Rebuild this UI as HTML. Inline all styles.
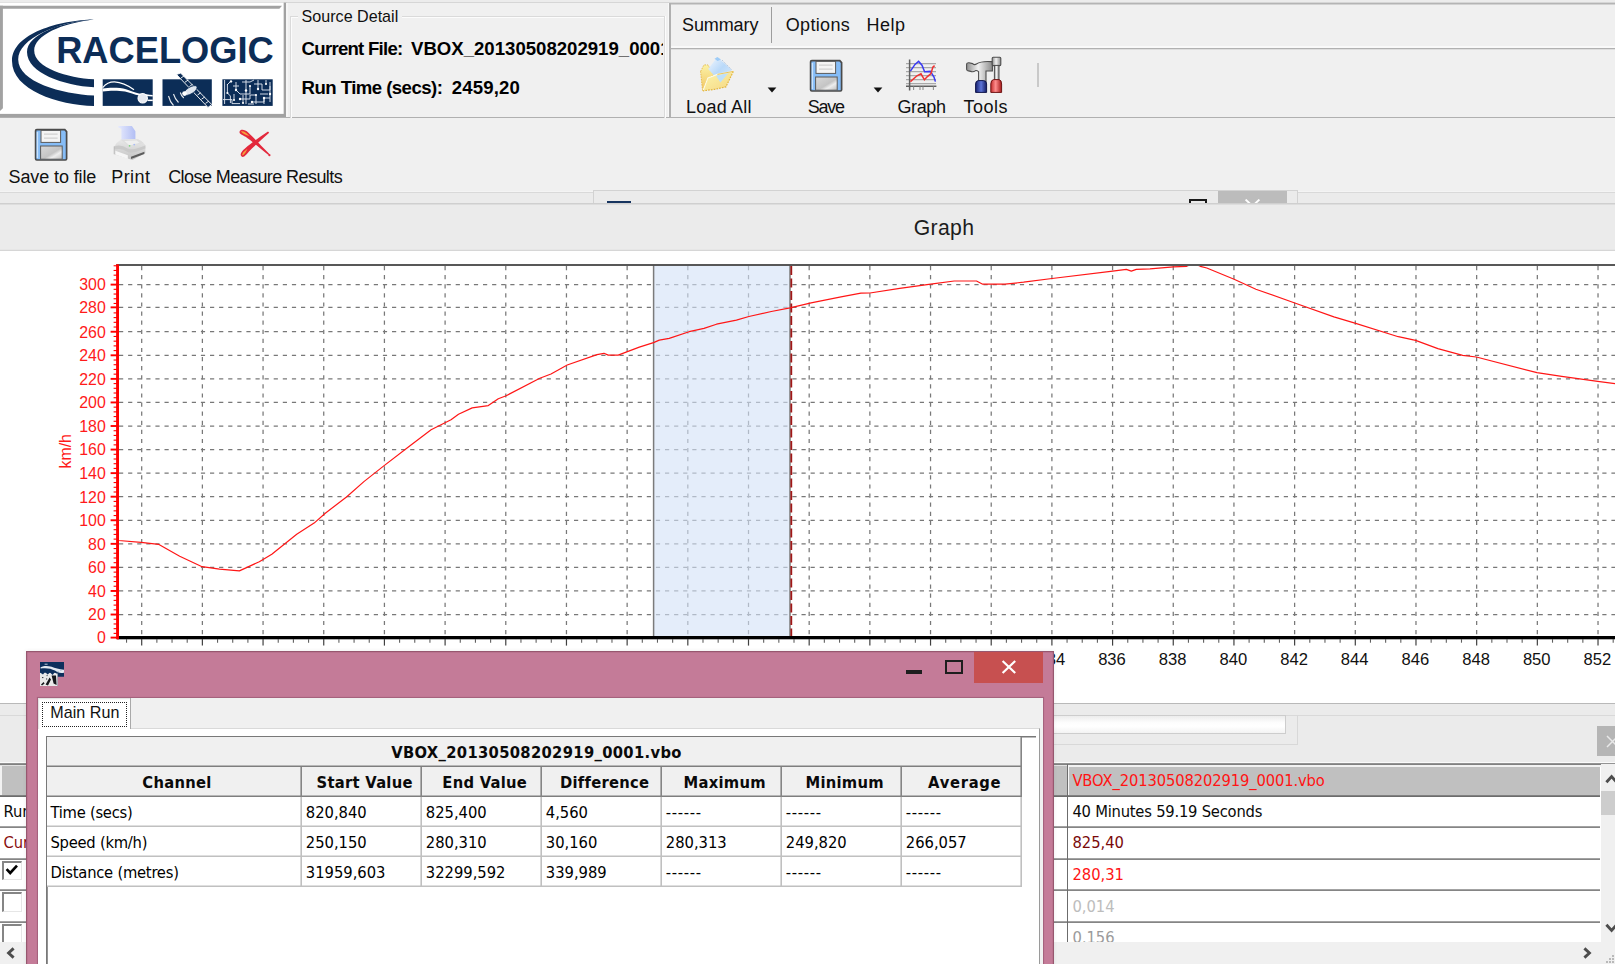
<!DOCTYPE html>
<html lang="en">
<head>
<meta charset="utf-8">
<title>VBOX Tools - Graph</title>
<style>
html,body{margin:0;padding:0}
body{width:1615px;height:964px;overflow:hidden;position:relative;background:#f0f0f0;font-family:"Liberation Sans",sans-serif;color:#000}
.abs{position:absolute}
.seg{font-family:"Liberation Sans",sans-serif;font-size:18px;color:#111;white-space:nowrap;position:absolute;line-height:20px}
.tah{font-family:"DejaVu Sans Condensed","Liberation Sans",sans-serif;font-size:16px;white-space:nowrap}
.gr{stroke:#787878;stroke-width:1.25;stroke-dasharray:4.2 4.9;fill:none}
.xl{font-family:"Liberation Sans",sans-serif;font-size:16.6px;fill:#111;text-anchor:middle}
.yl{font-family:"Liberation Sans",sans-serif;font-size:15.9px;fill:#ff1a1a;text-anchor:end}
/* ---- top ---- */
#topstrip{left:0;top:0;width:1615px;height:2px;background:#ececec}
#hline116{left:0;top:117px;width:1615px;height:2px;background:linear-gradient(#b0b0b0 50%,#d2d2d2 50%)}
/* ---- dialog ---- */
#dlg{left:26px;top:650.8px;width:1027.8px;height:330px;background:#c47b98;box-shadow:0 0 0 1.2px #97576f inset, 0 0 4px rgba(0,0,0,.08)}
#client{left:11.8px;top:46.8px;width:1004.8px;height:300px;background:#f0f0f0;box-shadow:0 0 0 1.1px #a5627d}
.hc{position:absolute;top:0;height:29.6px;line-height:32.4px;padding-left:5px;text-align:center;font-weight:bold;box-shadow:inset -1.6px 0 0 #858585;box-sizing:border-box}
.row{position:absolute;left:0;width:975.5px;height:30px;background:#fff;box-shadow:inset 0 -1.6px 0 #c0c0c0;box-sizing:border-box}
.c{position:absolute;top:0;height:28.8px;line-height:31.2px;box-shadow:inset -1.6px 0 0 #c0c0c0;box-sizing:border-box;padding-left:3.6px}
/* ---- bottom table ---- */
.brow{position:absolute;left:0;width:1599.5px;height:31.6px;box-shadow:inset 0 -1.7px 0 #858585;box-sizing:border-box;background:#fff}
.bt{position:absolute;left:1072.4px;top:0;line-height:32px}
</style>
</head>
<body>

<!-- ================= TOP PANEL ================= -->
<div class="abs" id="topstrip"></div>
<div class="abs" style="left:0;top:2px;width:1615px;height:1.2px;background:#d6d6d6"></div>
<!-- logo panel -->
<svg class="abs" style="left:0;top:0" width="290" height="120" viewBox="0 0 290 120">
  <rect x="0" y="2.7" width="283.7" height="111.2" fill="#fff"/>
  <polygon points="0,5.85 282,5.85 279.4,8.8 0,8.8" fill="#a2a2a2"/>
  <polygon points="0,5.85 2.9,5.85 2.9,108.2 0,111" fill="#a2a2a2"/>
  <rect x="283.7" y="2.7" width="2.7" height="115.9" fill="#a2a2a2"/>
  <rect x="0" y="113.9" width="286.4" height="4.75" fill="#a2a2a2"/>
</svg>
<div class="abs" style="left:286.4px;top:3px;width:1.2px;height:114px;background:#f6f6f6"></div>
<div class="abs" id="hline116"></div>
<svg class="abs" style="left:3px;top:9px" width="281" height="105" viewBox="3 9 281 105">
  <!-- swoosh arcs -->
  <path d="M94 19.4 C60 20 12 33 12 61 C12 90 58 105 94 106 L94 95.6 C62 94 18.2 82 18.2 59.5 C18.2 38 58 22 94 19.4 Z" fill="#0c2d57"/>
  <path d="M94 19.4 C62 21.6 27 34 27 52 C27 73 64 85.6 94 87.3 L94 79.3 C68 78 34.2 68 34.2 50.5 C34.2 35 62 23 94 19.4 Z" fill="#0c2d57"/>
  <!-- wordmark -->
  <text x="56.2" y="62.6" font-family="'Liberation Sans',sans-serif" font-weight="bold" font-size="37.3" fill="#0c2d57" textLength="217.5" lengthAdjust="spacingAndGlyphs">RACELOGIC</text>
  <!-- three tiles -->
  <rect x="102.7" y="79.3" width="50" height="26.6" fill="#0c2d57"/>
  <path d="M102.7 87.6 C106 83.6 110 81.8 114.5 81.9 C121 82.2 128 85.4 134 89.8" fill="none" stroke="#fff" stroke-width="1.15"/>
  <path d="M102.7 88.6 C110 87.4 120 87.6 126 89.2 C131 90.6 135.4 92.8 139 93.6 C144 94.4 149 94.6 152.7 95 L152.7 96.6 C148 96.2 143.6 96.2 139.6 95.6 C134 94.8 130 92.6 125 91.6 C118 90.2 109 90.6 102.7 91.4 Z" fill="#fff"/>
  <circle cx="142.7" cy="98.2" r="4.7" fill="#e6eaf1" stroke="#fff" stroke-width="1.1"/>
  <rect x="147.4" y="99.6" width="5.4" height="1.5" fill="#fff"/>
  <rect x="162.5" y="79.3" width="49.3" height="26.6" fill="#0c2d57"/>
  <g stroke="#fff" fill="none" stroke-width="1.1" opacity=".9">
    <path d="M168.5 96 q1.5 6 5 9.5"/><path d="M173.5 94 q1.5 5 5 8.5"/><path d="M180.3 92.5 q1 3.5 3.5 5.5"/>
  </g>
  <path d="M176.5 74.5 L180.6 73 L211.8 104.6 L208 107.4 Z" fill="#0c2d57" stroke="#fff" stroke-width=".9"/>
  <g stroke="#fff" stroke-width=".9"><path d="M181 78 l3.2-2.2M185 82.2 l3.2-2.2M189.3 86.6 l3.2-2.2M197.5 95 l3.2-2.2M201.5 99.2 l3.2-2.2M205.5 103.4 l3.2-2.2"/></g>
  <ellipse cx="190.5" cy="90.5" rx="7.5" ry="3.3" transform="rotate(-32 190.5 90.5)" fill="#dfe5ee" stroke="#0c2d57" stroke-width=".7"/>
  <circle cx="184.5" cy="93.6" r="2.3" fill="#fff"/>
  <rect x="222.4" y="79.3" width="50.3" height="26.6" fill="#0c2d57"/>
  <g stroke="#e4eaf3" stroke-width=".95" fill="none" opacity=".95">
    <path d="M224.6 80 v24 M227.4 84 v9 l3 3 v7 M223 99.6 h9 v4 h8 M231 81 l-4 4 M236 82 v8 M233 86 h6 M236 90 l4 4 h6 M246 80 v24 M242 82 h8 l4 -2 M250 86 v8 h-4 M240 99 h10 v-4 h6 M254 84 h8 v6 M258 80 v9 M262 90 h8 v-8 M266 80 v4 M256 95 v9 M252 102 h12 v-4 h6 M270 86 v16 M260 94 h8 M243 95 v8 M248 104 h6 M264 98 v6 M234 94 v6"/>
  </g>
  <g fill="#fff"><circle cx="231" cy="81.4" r="1.2"/><circle cx="236" cy="90" r="1.2"/><circle cx="246" cy="90.5" r="1.2"/><circle cx="258" cy="89" r="1.2"/><circle cx="264" cy="98" r="1.2"/><circle cx="240" cy="99" r="1.2"/><circle cx="252" cy="102" r="1.2"/><circle cx="270" cy="94" r="1.2"/><circle cx="227.4" cy="93" r="1.1"/><circle cx="250" cy="86" r="1.1"/><circle cx="266" cy="84" r="1.1"/><circle cx="256" cy="95" r="1.1"/><circle cx="243" cy="103" r="1.1"/><circle cx="234" cy="100" r="1.1"/></g>
</svg>

<!-- source detail group -->
<div class="abs" style="left:289.6px;top:15.6px;width:373px;height:101px;border:1px solid #dadada;border-bottom:none;box-shadow:1px 1px 0 #fcfcfc inset, 1px 0 0 #fcfcfc"></div>
<div class="abs" style="left:298px;top:6px;width:104px;height:20px;background:#f0f0f0"></div>
<div class="abs" style="left:301.6px;top:6.4px;font-size:16.1px;line-height:20px;color:#111;white-space:nowrap">Source Detail</div>
<div class="abs" style="left:301.6px;top:37px;width:361.8px;height:24px;overflow:hidden;font-size:18.6px;font-weight:bold;line-height:24px;white-space:nowrap;color:#000"><span class="abs" style="left:0;top:0;letter-spacing:-.74px">Current File:</span><span class="abs" style="left:109.4px;top:0;letter-spacing:0">VBOX_20130508202919_0001.vbo</span></div>
<div class="abs" style="left:301.6px;top:75.8px;width:300px;height:24px;font-size:18.6px;font-weight:bold;line-height:24px;white-space:nowrap;color:#000"><span class="abs" style="left:0;top:0;letter-spacing:-.55px">Run Time (secs):</span><span class="abs" style="left:150.2px;top:0;letter-spacing:.15px">2459,20</span></div>
<div class="abs" style="left:0;top:118.4px;width:1615px;height:8px;background:#f0f0f0"></div>

<!-- menu + toolbar frame -->
<div class="abs" style="left:669px;top:3px;width:946px;height:1px;background:#b4b4b4"></div><div class="abs" style="left:671px;top:4px;width:944px;height:1px;background:#d2d2d2"></div>
<div class="abs" style="left:667.9px;top:3px;width:1.3px;height:114px;background:#f8f8f8"></div><div class="abs" style="left:669.2px;top:3px;width:1.6px;height:114px;background:#b0b0b0"></div>
<div class="abs" style="left:670.8px;top:46.3px;width:945px;height:1.3px;background:#f9f9f9"></div><div class="abs" style="left:670px;top:48px;width:945px;height:1px;background:#b1b1b1"></div><div class="abs" style="left:671px;top:49px;width:944px;height:1px;background:#dedede"></div>
<div class="seg" style="left:682px;top:15.1px;letter-spacing:-.1px">Summary</div>
<div class="abs" style="left:771px;top:7.4px;width:1.4px;height:35.6px;background:#9d9d9d"></div>
<div class="seg" style="left:785.8px;top:15.1px;letter-spacing:.32px">Options</div>
<div class="seg" style="left:866.4px;top:15.1px;letter-spacing:.5px">Help</div>

<!-- Load All -->
<svg class="abs" style="left:698px;top:54px" width="40" height="40" viewBox="0 0 40 40">
  <defs><linearGradient id="fp" x1="0" y1="0" x2="1" y2="1"><stop offset="0" stop-color="#f4f8fe"/><stop offset=".5" stop-color="#b9d9f9"/><stop offset="1" stop-color="#d9eafc"/></linearGradient>
  <linearGradient id="ff" x1="0" y1="0" x2="1" y2="1"><stop offset="0" stop-color="#fcf6ad"/><stop offset="1" stop-color="#f5d682"/></linearGradient>
  <linearGradient id="fb" x1="0" y1="0" x2="0" y2="1"><stop offset="0" stop-color="#fbf2a6"/><stop offset="1" stop-color="#f2c461"/></linearGradient></defs>
  <path d="M2.6 17.4 L6 10.9 H9.9 L15.9 20.9 L9.9 24 L4.6 37.2 Z" fill="url(#fb)" stroke="#e4b948" stroke-width=".9" stroke-dasharray="1.6 1"/>
  <path d="M19.4 3 L33.8 15.9 L22.4 28.4 L10.2 14.9 Z" fill="url(#fp)"/>
  <path d="M16.5 4.8 L19.4 3 L23 5.4 L19.6 7 Z" fill="#8fc4f6" opacity=".8"/>
  <path d="M24 6 L33.8 15.9" stroke="#b5c6dc" stroke-width="1" stroke-dasharray="1.4 1"/>
  <path d="M5 36.8 L9.9 23.9 L19.4 20.4 L35.3 17.4 L27.9 32.9 L16.9 35.3 Z" fill="url(#ff)"/>
  <path d="M17.9 21.6 L30.6 19 L22.4 28.4 Z" fill="#bfe0f9"/>
  <path d="M5 36.8 L9.9 23.9 L19.4 20.4 L35.3 17.4" fill="none" stroke="#fdfbe6" stroke-width="1.1"/>
  <path d="M35.3 17.4 L27.9 32.9 L16.9 35.3 L5 36.8" fill="none" stroke="#e2b53e" stroke-width="1.2" stroke-dasharray="1.7 1.1"/>
  <path d="M19.4 20.4 L35.3 17.4" fill="none" stroke="#e6bd4e" stroke-width=".9"/>
</svg>
<div class="seg" style="left:686px;top:97.4px;letter-spacing:.2px">Load All</div>
<svg class="abs" style="left:766.5px;top:86.6px" width="10" height="6" viewBox="0 0 10 6"><path d="M.6 .6 L9.4 .6 L5 5.4 Z" fill="#111"/></svg>

<!-- Save -->
<svg class="abs" style="left:809.4px;top:59.2px" width="34" height="33" viewBox="0 0 34 33">
  <use href="#floppy"/>
</svg>
<div class="seg" style="left:807.8px;top:97.4px;letter-spacing:-1.25px">Save</div>
<svg class="abs" style="left:873.3px;top:86.6px" width="10" height="6" viewBox="0 0 10 6"><path d="M.6 .6 L9.4 .6 L5 5.4 Z" fill="#111"/></svg>

<!-- Graph -->
<svg class="abs" style="left:904px;top:58px" width="36" height="36" viewBox="0 0 36 36">
  <g stroke="#a9a9a9" stroke-width="1.1"><path d="M2 5.6 H32 M2 9.6 H32 M2 13.6 H32 M2 17.6 H32 M2 21.6 H32 M2 25.6 H32"/></g>
  <path d="M5.6 1.5 V32.5 M2 28.2 H32.4" stroke="#606060" stroke-width="1.5" fill="none"/>
  <path d="M9.6 28.5 v3.6 M16 28.5 v3.6 M19 28.5 v3.6 M29.4 28.5 v3.6" stroke="#909090" stroke-width="1.1"/>
  <path d="M6.4 13.2 L11 6.4 L14.6 3.4 L18 7.2 L20.6 13.8 L26.4 13.4 L30 19 L31.4 23.6" fill="none" stroke="#3a3af2" stroke-width="1.5"/>
  <path d="M6.4 23.6 L13 17.8 L17 15.8 L20.4 21.8 L23.4 18.6 L27 15.6 L28.8 9.2 L30.6 7.6" fill="none" stroke="#f03030" stroke-width="1.5"/>
</svg>
<div class="seg" style="left:897.4px;top:97.4px;letter-spacing:-.35px">Graph</div>

<!-- Tools -->
<svg class="abs" style="left:964px;top:55px" width="42" height="40" viewBox="0 0 42 40">
  <defs><linearGradient id="mg" x1="0" x2="1"><stop offset="0" stop-color="#8f8f8f"/><stop offset=".45" stop-color="#f2f2f2"/><stop offset="1" stop-color="#8a8a8a"/></linearGradient>
  <linearGradient id="bg" x1="0" x2="1"><stop offset="0" stop-color="#16206e"/><stop offset=".5" stop-color="#5d74d8"/><stop offset="1" stop-color="#141c62"/></linearGradient>
  <linearGradient id="rg" x1="0" x2="1"><stop offset="0" stop-color="#c22a2a"/><stop offset=".45" stop-color="#ff8d8d"/><stop offset="1" stop-color="#a51818"/></linearGradient></defs>
  <path d="M2.6 9.6 Q2.6 7.6 5 7.8 L8.6 8.6 Q10.4 10.4 12.4 9 Q17 6 27 6.6 L28.4 6.6 V16 H22 V27 H14.6 V16.6 Q13 15.4 11.6 15.6 Q9.6 17 7.6 16.6 L3.6 15.6 Q2.4 15.2 2.6 13.6 Z" fill="url(#mg)" stroke="#4e4e4e" stroke-width="1.1"/>
  <rect x="28.2" y="2.2" width="8.6" height="8.4" rx="1" fill="url(#mg)" stroke="#4e4e4e" stroke-width="1.1"/>
  <rect x="30.4" y="10.4" width="4.6" height="15" fill="url(#mg)" stroke="#4e4e4e" stroke-width="1"/>
  <path d="M11.6 37.4 V29 Q11.6 25.8 14.4 25.6 H19.6 Q22.6 25.8 22.6 29 V37.4 Z" fill="url(#bg)" stroke="#11164a" stroke-width="1"/>
  <path d="M26.8 37.4 V29 Q26.8 25 29.6 24.6 H35 Q37.6 25 37.6 29 V37.4 Z" fill="url(#rg)" stroke="#6e1414" stroke-width="1"/>
</svg>
<div class="seg" style="left:963.4px;top:97.4px;letter-spacing:.5px">Tools</div>
<div class="abs" style="left:1037px;top:63px;width:2px;height:24px;background:#c9c9c9"></div>

<!-- shared floppy symbol -->
<svg width="0" height="0" style="position:absolute">
  <defs>
    <linearGradient id="shut" x1="0" y1="0" x2="1" y2="1"><stop offset="0" stop-color="#d9d9d9"/><stop offset=".55" stop-color="#c4c4c4"/><stop offset=".7" stop-color="#ededed"/><stop offset="1" stop-color="#bdbdbd"/></linearGradient>
    <g id="floppy">
      <path d="M1.6 2.8 Q1.6 1.6 2.8 1.6 H30.8 L32.6 3.6 V30.8 Q32.6 32 31.4 32 H2.8 Q1.6 32 1.6 30.8 Z" fill="#86bdf7" stroke="#4a4a4a" stroke-width="1.7"/>
      <path d="M3.4 4 V30" stroke="#c9e2fc" stroke-width="1.4"/>
      <rect x="7" y="2.4" width="19.6" height="12" fill="#f4f4f4" stroke="#5a5a5a" stroke-width="1"/>
      <path d="M10 6.2 H23.6 M10 10.2 H23.6" stroke="#cfcfcf" stroke-width="1.2"/>
      <rect x="6.6" y="18" width="21.6" height="13.2" fill="url(#shut)" stroke="#5a5a5a" stroke-width="1"/>
    </g>
  </defs>
</svg>


<!-- ================= TOOLBAR 2 ================= -->
<svg class="abs" style="left:34.4px;top:128.4px" width="34" height="33" viewBox="0 0 34 33"><use href="#floppy"/></svg>
<div class="seg" style="left:8.6px;top:166.6px;letter-spacing:-.12px">Save to file</div>
<!-- printer -->
<svg class="abs" style="left:112px;top:124px" width="38" height="38" viewBox="0 0 38 38">
  <defs><linearGradient id="pap" x1="0" y1="0" x2="1" y2="0"><stop offset="0" stop-color="#e6eafd"/><stop offset="1" stop-color="#b2bef4"/></linearGradient>
  <linearGradient id="pbody" x1="0" y1="0" x2="0" y2="1"><stop offset="0" stop-color="#e9e9e9"/><stop offset="1" stop-color="#c4c4c4"/></linearGradient></defs>
  <path d="M6.3 2 H19.9 L23.4 7.2 V15 L9.4 16 V4.8 L6.3 3.4 Z" fill="url(#pap)"/>
  <path d="M2.2 22.4 Q4.6 18.4 8.6 15.8 L26 15.2 Q31.4 17.6 33.4 21.4 V29 L20.4 36 L2.2 30.2 Z" fill="url(#pbody)"/>
  <path d="M8.6 15.8 L26 15.2 Q29.4 16.8 31.4 19 L18 23.4 Q12.6 18.6 8.6 15.8 Z" fill="#dedede"/>
  <path d="M12.4 17 L24.6 16.4 L27.6 18.8 L17.6 21.4 Z" fill="#efefef"/>
  <path d="M2.2 22.4 Q9 20 15.6 24.6 Q19 27 33.4 21.4 V24.4 Q19 30.4 15.8 28 Q9 23.4 2.2 25.6 Z" fill="#c9c9c9"/>
  <path d="M3.4 26.8 L15.8 31.2 V35 L3.4 30.6 Z" fill="#f6f6f6"/>
  <path d="M19 32.8 L32.4 27.8 V30 L19 35 Z" fill="#5c5c5c"/>
  <path d="M2.2 22.4 V30.2" stroke="#b5b5b5" stroke-width=".8"/>
  <circle cx="17.6" cy="21.8" r=".9" fill="#7ed47e"/><circle cx="22.2" cy="20.6" r=".85" fill="#a3b8f6"/>
</svg>
<div class="seg" style="left:111.2px;top:166.6px;letter-spacing:.45px">Print</div>
<!-- red X -->
<svg class="abs" style="left:238px;top:128px" width="36" height="32" viewBox="0 0 36 32">
  <path d="M1.6 3.6 C2.4 .8 7.2 1.6 10.2 4.6 C15.4 9.4 23 17.8 31.4 26 L30.4 27 C22 20 13.4 12.8 7.6 8.8 C4 6.6 1 5.8 1.6 3.6 Z" fill="#e3283c"/>
  <path d="M3.6 28.6 C1.4 26.6 3.2 23.4 7 20.4 C13 15.2 22 8.8 30 3.4 L31.2 4.8 C24 11 16.8 17.8 11.2 23.2 C8.6 26.2 5.8 30.2 3.6 28.6 Z" fill="#e3283c"/>
  <path d="M3 3.4 C5.4 2.8 8.4 4.8 11.4 8 C8 6.6 4.6 6 3 3.4 Z" fill="#f7a13a"/>
  <path d="M4.4 27.4 C3.8 25.6 6 23.2 9.4 21 C8 23.8 6.6 26.8 4.4 27.4 Z" fill="#f7a13a"/>
  <circle cx="31.4" cy="27.2" r="1.1" fill="#e3283c"/>
</svg>
<div class="seg" style="left:168.2px;top:166.6px;letter-spacing:-.58px">Close Measure Results</div>
<div class="abs" style="left:0;top:190.9px;width:1615px;height:1px;background:#f4f4f4"></div><div class="abs" style="left:0;top:191.9px;width:1615px;height:1.2px;background:#d9d9d9"></div>


<!-- ================= GRAPH ================= -->
<!-- strip 192-204 with window fragment -->
<div class="abs" style="left:0;top:192.8px;width:593px;height:10.6px;background:#ebebeb"></div>
<div class="abs" style="left:1298px;top:192.8px;width:317px;height:10.6px;background:#ebebeb"></div>
<div class="abs" style="left:592.8px;top:190.2px;width:703.4px;height:14px;background:#ebebeb;border:1.2px solid #d2d2d2;border-bottom:none"></div>
<div class="abs" style="left:607px;top:201px;width:24px;height:3.4px;background:#16345f"></div>
<div class="abs" style="left:1189px;top:199px;width:14.2px;height:6px;border:2px solid #1a1a1a;border-bottom:none"></div>
<div class="abs" style="left:1218.2px;top:191.2px;width:68.6px;height:13.2px;background:#bcbcbc;overflow:hidden">
  <svg class="abs" style="left:26px;top:8px" width="17" height="14" viewBox="0 0 17 14"><path d="M1.6 .6 L15.4 13.4 M15.4 .6 L1.6 13.4" stroke="#fff" stroke-width="1.9" fill="none"/></svg>
</div>
<!-- Graph header -->
<div class="abs" style="left:0;top:203.1px;width:1615px;height:48px;background:#ebebeb;box-shadow:inset 0 1.6px 0 #cfcfcf, inset 0 -1.3px 0 #d6d6d6;box-sizing:border-box"></div>
<div class="abs" style="left:844px;top:214.6px;width:200px;text-align:center;font-size:21.2px;line-height:26px;color:#1c1c1c;letter-spacing:.35px">Graph</div>

<div class="abs" style="left:0;top:251px;width:1615px;height:452px;background:#fff"></div>
<svg id="gsvg" width="1615" height="452" viewBox="0 0 1615 452" style="position:absolute;left:0;top:251px">
<defs><clipPath id="pc"><rect x="118" y="14.95" width="1500" height="374"/></clipPath></defs>
<line x1="119" x2="1615" y1="363.53" y2="363.53" class="gr"/>
<line x1="119" x2="1615" y1="339.97" y2="339.97" class="gr"/>
<line x1="119" x2="1615" y1="316.40" y2="316.40" class="gr"/>
<line x1="119" x2="1615" y1="292.84" y2="292.84" class="gr"/>
<line x1="119" x2="1615" y1="269.27" y2="269.27" class="gr"/>
<line x1="119" x2="1615" y1="245.70" y2="245.70" class="gr"/>
<line x1="119" x2="1615" y1="222.14" y2="222.14" class="gr"/>
<line x1="119" x2="1615" y1="198.57" y2="198.57" class="gr"/>
<line x1="119" x2="1615" y1="175.01" y2="175.01" class="gr"/>
<line x1="119" x2="1615" y1="151.44" y2="151.44" class="gr"/>
<line x1="119" x2="1615" y1="127.87" y2="127.87" class="gr"/>
<line x1="119" x2="1615" y1="104.31" y2="104.31" class="gr"/>
<line x1="119" x2="1615" y1="80.74" y2="80.74" class="gr"/>
<line x1="119" x2="1615" y1="56.35" y2="56.35" class="gr"/>
<line x1="119" x2="1615" y1="33.61" y2="33.61" class="gr"/>
<line y1="15.00" y2="385.00" x1="141.70" x2="141.70" class="gr"/>
<line y1="15.00" y2="385.00" x1="202.38" x2="202.38" class="gr"/>
<line y1="15.00" y2="385.00" x1="263.06" x2="263.06" class="gr"/>
<line y1="15.00" y2="385.00" x1="323.74" x2="323.74" class="gr"/>
<line y1="15.00" y2="385.00" x1="384.42" x2="384.42" class="gr"/>
<line y1="15.00" y2="385.00" x1="445.10" x2="445.10" class="gr"/>
<line y1="15.00" y2="385.00" x1="505.78" x2="505.78" class="gr"/>
<line y1="15.00" y2="385.00" x1="566.46" x2="566.46" class="gr"/>
<line y1="15.00" y2="385.00" x1="627.14" x2="627.14" class="gr"/>
<line y1="15.00" y2="385.00" x1="687.82" x2="687.82" class="gr"/>
<line y1="15.00" y2="385.00" x1="748.50" x2="748.50" class="gr"/>
<line y1="15.00" y2="385.00" x1="809.18" x2="809.18" class="gr"/>
<line y1="15.00" y2="385.00" x1="869.86" x2="869.86" class="gr"/>
<line y1="15.00" y2="385.00" x1="930.54" x2="930.54" class="gr"/>
<line y1="15.00" y2="385.00" x1="991.22" x2="991.22" class="gr"/>
<line y1="15.00" y2="385.00" x1="1051.90" x2="1051.90" class="gr"/>
<line y1="15.00" y2="385.00" x1="1112.58" x2="1112.58" class="gr"/>
<line y1="15.00" y2="385.00" x1="1173.26" x2="1173.26" class="gr"/>
<line y1="15.00" y2="385.00" x1="1233.94" x2="1233.94" class="gr"/>
<line y1="15.00" y2="385.00" x1="1294.62" x2="1294.62" class="gr"/>
<line y1="15.00" y2="385.00" x1="1355.30" x2="1355.30" class="gr"/>
<line y1="15.00" y2="385.00" x1="1415.98" x2="1415.98" class="gr"/>
<line y1="15.00" y2="385.00" x1="1476.66" x2="1476.66" class="gr"/>
<line y1="15.00" y2="385.00" x1="1537.34" x2="1537.34" class="gr"/>
<line y1="15.00" y2="385.00" x1="1598.02" x2="1598.02" class="gr"/>
<rect x="653.60" y="14.80" width="136.40" height="370.20" fill="#d3e2f7" fill-opacity="0.62"/>
<line x1="653.60" x2="653.60" y1="14.80" y2="385.00" stroke="#7b7b7b" stroke-width="1.5"/>
<line x1="790.00" x2="790.00" y1="14.80" y2="385.00" stroke="#7b7b7b" stroke-width="1.5"/>
<line x1="791.30" x2="791.30" y1="15.00" y2="385.00" stroke="#a01818" stroke-width="1.8" stroke-dasharray="9 3.5"/>
<line x1="116.2" x2="1615" y1="14.10" y2="14.10" stroke="#202020" stroke-width="1.5"/>
<polyline clip-path="url(#pc)" fill="none" stroke="#ff1616" stroke-width="1.2" stroke-linejoin="round" points="117.0,289.3 118.7,289.5 141.1,291.3 158.5,293.3 179.7,305.2 202.1,315.7 219.5,318.2 239.4,319.9 259.3,310.7 271.8,303.2 296.7,283.3 314.1,272.1 325.3,262.2 346.5,246.0 363.9,230.6 383.8,214.9 408.7,195.7 431.1,178.8 451.0,168.8 458.5,163.3 472.2,156.9 488.3,154.6 498.3,147.7 506.2,144.7 539.8,127.2 551.0,123.0 567.2,114.0 597.0,103.6 604.0,102.3 608.2,104.1 618.2,104.1 639.3,96.1 653.5,91.6 659.3,89.1 669.2,87.4 689.1,80.7 704.0,77.4 716.5,73.2 736.4,69.2 748.9,65.5 771.3,60.5 790.0,56.8 811.1,51.8 841.0,45.8 860.9,42.1 870.0,42.0 899.7,37.4 930.7,33.2 954.2,30.0 976.5,30.0 982.7,33.2 1005.0,33.2 1023.6,31.2 1052.0,27.5 1112.7,20.1 1126.3,18.4 1131.3,20.1 1136.3,18.4 1150.0,17.9 1173.4,15.9 1186.7,15.3 1193.5,12.0 1200.3,15.3 1206.8,17.0 1234.1,28.3 1255.9,38.2 1295.5,52.3 1333.9,65.9 1354.9,72.1 1398.3,85.7 1415.6,89.4 1437.9,97.6 1462.7,104.3 1476.3,106.0 1537.0,121.6 1561.7,125.4 1597.7,130.3 1616.0,132.8"/>
<rect x="117" y="385.00" width="1500" height="3.3" fill="#000"/>
<line x1="126.53" x2="126.53" y1="388.00" y2="391.70" stroke="#606060" stroke-width="1.1"/>
<line x1="141.70" x2="141.70" y1="388.00" y2="394.60" stroke="#404040" stroke-width="1.2"/>
<line x1="156.87" x2="156.87" y1="388.00" y2="391.70" stroke="#606060" stroke-width="1.1"/>
<line x1="172.04" x2="172.04" y1="388.00" y2="391.70" stroke="#606060" stroke-width="1.1"/>
<line x1="187.21" x2="187.21" y1="388.00" y2="391.70" stroke="#606060" stroke-width="1.1"/>
<line x1="202.38" x2="202.38" y1="388.00" y2="394.60" stroke="#404040" stroke-width="1.2"/>
<line x1="217.55" x2="217.55" y1="388.00" y2="391.70" stroke="#606060" stroke-width="1.1"/>
<line x1="232.72" x2="232.72" y1="388.00" y2="391.70" stroke="#606060" stroke-width="1.1"/>
<line x1="247.89" x2="247.89" y1="388.00" y2="391.70" stroke="#606060" stroke-width="1.1"/>
<line x1="263.06" x2="263.06" y1="388.00" y2="394.60" stroke="#404040" stroke-width="1.2"/>
<line x1="278.23" x2="278.23" y1="388.00" y2="391.70" stroke="#606060" stroke-width="1.1"/>
<line x1="293.40" x2="293.40" y1="388.00" y2="391.70" stroke="#606060" stroke-width="1.1"/>
<line x1="308.57" x2="308.57" y1="388.00" y2="391.70" stroke="#606060" stroke-width="1.1"/>
<line x1="323.74" x2="323.74" y1="388.00" y2="394.60" stroke="#404040" stroke-width="1.2"/>
<line x1="338.91" x2="338.91" y1="388.00" y2="391.70" stroke="#606060" stroke-width="1.1"/>
<line x1="354.08" x2="354.08" y1="388.00" y2="391.70" stroke="#606060" stroke-width="1.1"/>
<line x1="369.25" x2="369.25" y1="388.00" y2="391.70" stroke="#606060" stroke-width="1.1"/>
<line x1="384.42" x2="384.42" y1="388.00" y2="394.60" stroke="#404040" stroke-width="1.2"/>
<line x1="399.59" x2="399.59" y1="388.00" y2="391.70" stroke="#606060" stroke-width="1.1"/>
<line x1="414.76" x2="414.76" y1="388.00" y2="391.70" stroke="#606060" stroke-width="1.1"/>
<line x1="429.93" x2="429.93" y1="388.00" y2="391.70" stroke="#606060" stroke-width="1.1"/>
<line x1="445.10" x2="445.10" y1="388.00" y2="394.60" stroke="#404040" stroke-width="1.2"/>
<line x1="460.27" x2="460.27" y1="388.00" y2="391.70" stroke="#606060" stroke-width="1.1"/>
<line x1="475.44" x2="475.44" y1="388.00" y2="391.70" stroke="#606060" stroke-width="1.1"/>
<line x1="490.61" x2="490.61" y1="388.00" y2="391.70" stroke="#606060" stroke-width="1.1"/>
<line x1="505.78" x2="505.78" y1="388.00" y2="394.60" stroke="#404040" stroke-width="1.2"/>
<line x1="520.95" x2="520.95" y1="388.00" y2="391.70" stroke="#606060" stroke-width="1.1"/>
<line x1="536.12" x2="536.12" y1="388.00" y2="391.70" stroke="#606060" stroke-width="1.1"/>
<line x1="551.29" x2="551.29" y1="388.00" y2="391.70" stroke="#606060" stroke-width="1.1"/>
<line x1="566.46" x2="566.46" y1="388.00" y2="394.60" stroke="#404040" stroke-width="1.2"/>
<line x1="581.63" x2="581.63" y1="388.00" y2="391.70" stroke="#606060" stroke-width="1.1"/>
<line x1="596.80" x2="596.80" y1="388.00" y2="391.70" stroke="#606060" stroke-width="1.1"/>
<line x1="611.97" x2="611.97" y1="388.00" y2="391.70" stroke="#606060" stroke-width="1.1"/>
<line x1="627.14" x2="627.14" y1="388.00" y2="394.60" stroke="#404040" stroke-width="1.2"/>
<line x1="642.31" x2="642.31" y1="388.00" y2="391.70" stroke="#606060" stroke-width="1.1"/>
<line x1="657.48" x2="657.48" y1="388.00" y2="391.70" stroke="#606060" stroke-width="1.1"/>
<line x1="672.65" x2="672.65" y1="388.00" y2="391.70" stroke="#606060" stroke-width="1.1"/>
<line x1="687.82" x2="687.82" y1="388.00" y2="394.60" stroke="#404040" stroke-width="1.2"/>
<line x1="702.99" x2="702.99" y1="388.00" y2="391.70" stroke="#606060" stroke-width="1.1"/>
<line x1="718.16" x2="718.16" y1="388.00" y2="391.70" stroke="#606060" stroke-width="1.1"/>
<line x1="733.33" x2="733.33" y1="388.00" y2="391.70" stroke="#606060" stroke-width="1.1"/>
<line x1="748.50" x2="748.50" y1="388.00" y2="394.60" stroke="#404040" stroke-width="1.2"/>
<line x1="763.67" x2="763.67" y1="388.00" y2="391.70" stroke="#606060" stroke-width="1.1"/>
<line x1="778.84" x2="778.84" y1="388.00" y2="391.70" stroke="#606060" stroke-width="1.1"/>
<line x1="794.01" x2="794.01" y1="388.00" y2="391.70" stroke="#606060" stroke-width="1.1"/>
<line x1="809.18" x2="809.18" y1="388.00" y2="394.60" stroke="#404040" stroke-width="1.2"/>
<line x1="824.35" x2="824.35" y1="388.00" y2="391.70" stroke="#606060" stroke-width="1.1"/>
<line x1="839.52" x2="839.52" y1="388.00" y2="391.70" stroke="#606060" stroke-width="1.1"/>
<line x1="854.69" x2="854.69" y1="388.00" y2="391.70" stroke="#606060" stroke-width="1.1"/>
<line x1="869.86" x2="869.86" y1="388.00" y2="394.60" stroke="#404040" stroke-width="1.2"/>
<line x1="885.03" x2="885.03" y1="388.00" y2="391.70" stroke="#606060" stroke-width="1.1"/>
<line x1="900.20" x2="900.20" y1="388.00" y2="391.70" stroke="#606060" stroke-width="1.1"/>
<line x1="915.37" x2="915.37" y1="388.00" y2="391.70" stroke="#606060" stroke-width="1.1"/>
<line x1="930.54" x2="930.54" y1="388.00" y2="394.60" stroke="#404040" stroke-width="1.2"/>
<line x1="945.71" x2="945.71" y1="388.00" y2="391.70" stroke="#606060" stroke-width="1.1"/>
<line x1="960.88" x2="960.88" y1="388.00" y2="391.70" stroke="#606060" stroke-width="1.1"/>
<line x1="976.05" x2="976.05" y1="388.00" y2="391.70" stroke="#606060" stroke-width="1.1"/>
<line x1="991.22" x2="991.22" y1="388.00" y2="394.60" stroke="#404040" stroke-width="1.2"/>
<line x1="1006.39" x2="1006.39" y1="388.00" y2="391.70" stroke="#606060" stroke-width="1.1"/>
<line x1="1021.56" x2="1021.56" y1="388.00" y2="391.70" stroke="#606060" stroke-width="1.1"/>
<line x1="1036.73" x2="1036.73" y1="388.00" y2="391.70" stroke="#606060" stroke-width="1.1"/>
<line x1="1051.90" x2="1051.90" y1="388.00" y2="394.60" stroke="#404040" stroke-width="1.2"/>
<line x1="1067.07" x2="1067.07" y1="388.00" y2="391.70" stroke="#606060" stroke-width="1.1"/>
<line x1="1082.24" x2="1082.24" y1="388.00" y2="391.70" stroke="#606060" stroke-width="1.1"/>
<line x1="1097.41" x2="1097.41" y1="388.00" y2="391.70" stroke="#606060" stroke-width="1.1"/>
<line x1="1112.58" x2="1112.58" y1="388.00" y2="394.60" stroke="#404040" stroke-width="1.2"/>
<line x1="1127.75" x2="1127.75" y1="388.00" y2="391.70" stroke="#606060" stroke-width="1.1"/>
<line x1="1142.92" x2="1142.92" y1="388.00" y2="391.70" stroke="#606060" stroke-width="1.1"/>
<line x1="1158.09" x2="1158.09" y1="388.00" y2="391.70" stroke="#606060" stroke-width="1.1"/>
<line x1="1173.26" x2="1173.26" y1="388.00" y2="394.60" stroke="#404040" stroke-width="1.2"/>
<line x1="1188.43" x2="1188.43" y1="388.00" y2="391.70" stroke="#606060" stroke-width="1.1"/>
<line x1="1203.60" x2="1203.60" y1="388.00" y2="391.70" stroke="#606060" stroke-width="1.1"/>
<line x1="1218.77" x2="1218.77" y1="388.00" y2="391.70" stroke="#606060" stroke-width="1.1"/>
<line x1="1233.94" x2="1233.94" y1="388.00" y2="394.60" stroke="#404040" stroke-width="1.2"/>
<line x1="1249.11" x2="1249.11" y1="388.00" y2="391.70" stroke="#606060" stroke-width="1.1"/>
<line x1="1264.28" x2="1264.28" y1="388.00" y2="391.70" stroke="#606060" stroke-width="1.1"/>
<line x1="1279.45" x2="1279.45" y1="388.00" y2="391.70" stroke="#606060" stroke-width="1.1"/>
<line x1="1294.62" x2="1294.62" y1="388.00" y2="394.60" stroke="#404040" stroke-width="1.2"/>
<line x1="1309.79" x2="1309.79" y1="388.00" y2="391.70" stroke="#606060" stroke-width="1.1"/>
<line x1="1324.96" x2="1324.96" y1="388.00" y2="391.70" stroke="#606060" stroke-width="1.1"/>
<line x1="1340.13" x2="1340.13" y1="388.00" y2="391.70" stroke="#606060" stroke-width="1.1"/>
<line x1="1355.30" x2="1355.30" y1="388.00" y2="394.60" stroke="#404040" stroke-width="1.2"/>
<line x1="1370.47" x2="1370.47" y1="388.00" y2="391.70" stroke="#606060" stroke-width="1.1"/>
<line x1="1385.64" x2="1385.64" y1="388.00" y2="391.70" stroke="#606060" stroke-width="1.1"/>
<line x1="1400.81" x2="1400.81" y1="388.00" y2="391.70" stroke="#606060" stroke-width="1.1"/>
<line x1="1415.98" x2="1415.98" y1="388.00" y2="394.60" stroke="#404040" stroke-width="1.2"/>
<line x1="1431.15" x2="1431.15" y1="388.00" y2="391.70" stroke="#606060" stroke-width="1.1"/>
<line x1="1446.32" x2="1446.32" y1="388.00" y2="391.70" stroke="#606060" stroke-width="1.1"/>
<line x1="1461.49" x2="1461.49" y1="388.00" y2="391.70" stroke="#606060" stroke-width="1.1"/>
<line x1="1476.66" x2="1476.66" y1="388.00" y2="394.60" stroke="#404040" stroke-width="1.2"/>
<line x1="1491.83" x2="1491.83" y1="388.00" y2="391.70" stroke="#606060" stroke-width="1.1"/>
<line x1="1507.00" x2="1507.00" y1="388.00" y2="391.70" stroke="#606060" stroke-width="1.1"/>
<line x1="1522.17" x2="1522.17" y1="388.00" y2="391.70" stroke="#606060" stroke-width="1.1"/>
<line x1="1537.34" x2="1537.34" y1="388.00" y2="394.60" stroke="#404040" stroke-width="1.2"/>
<line x1="1552.51" x2="1552.51" y1="388.00" y2="391.70" stroke="#606060" stroke-width="1.1"/>
<line x1="1567.68" x2="1567.68" y1="388.00" y2="391.70" stroke="#606060" stroke-width="1.1"/>
<line x1="1582.85" x2="1582.85" y1="388.00" y2="391.70" stroke="#606060" stroke-width="1.1"/>
<line x1="1598.02" x2="1598.02" y1="388.00" y2="394.60" stroke="#404040" stroke-width="1.2"/>
<line x1="1613.19" x2="1613.19" y1="388.00" y2="391.70" stroke="#606060" stroke-width="1.1"/>
<text x="141.10" y="413.80" class="xl">804</text>
<text x="201.78" y="413.80" class="xl">806</text>
<text x="262.46" y="413.80" class="xl">808</text>
<text x="323.14" y="413.80" class="xl">810</text>
<text x="383.82" y="413.80" class="xl">812</text>
<text x="444.50" y="413.80" class="xl">814</text>
<text x="505.18" y="413.80" class="xl">816</text>
<text x="565.86" y="413.80" class="xl">818</text>
<text x="626.54" y="413.80" class="xl">820</text>
<text x="687.22" y="413.80" class="xl">822</text>
<text x="747.90" y="413.80" class="xl">824</text>
<text x="808.58" y="413.80" class="xl">826</text>
<text x="869.26" y="413.80" class="xl">828</text>
<text x="929.94" y="413.80" class="xl">830</text>
<text x="990.62" y="413.80" class="xl">832</text>
<text x="1051.30" y="413.80" class="xl">834</text>
<text x="1111.98" y="413.80" class="xl">836</text>
<text x="1172.66" y="413.80" class="xl">838</text>
<text x="1233.34" y="413.80" class="xl">840</text>
<text x="1294.02" y="413.80" class="xl">842</text>
<text x="1354.70" y="413.80" class="xl">844</text>
<text x="1415.38" y="413.80" class="xl">846</text>
<text x="1476.06" y="413.80" class="xl">848</text>
<text x="1536.74" y="413.80" class="xl">850</text>
<text x="1597.42" y="413.80" class="xl">852</text>
<rect x="116.1" y="13.30" width="2.9" height="375.00" fill="#ff0000"/>
<line x1="110.6" x2="117" y1="386.60" y2="386.60" stroke="#ff0000" stroke-width="1.9"/>
<text x="105.8" y="392.40" class="yl">0</text>
<line x1="113.6" x2="117" y1="382.39" y2="382.39" stroke="#ff0000" stroke-width="1.1"/>
<line x1="113.6" x2="117" y1="377.67" y2="377.67" stroke="#ff0000" stroke-width="1.1"/>
<line x1="113.6" x2="117" y1="372.96" y2="372.96" stroke="#ff0000" stroke-width="1.1"/>
<line x1="113.6" x2="117" y1="368.25" y2="368.25" stroke="#ff0000" stroke-width="1.1"/>
<line x1="110.6" x2="117" y1="363.53" y2="363.53" stroke="#ff0000" stroke-width="1.9"/>
<text x="105.8" y="369.33" class="yl">20</text>
<line x1="113.6" x2="117" y1="358.82" y2="358.82" stroke="#ff0000" stroke-width="1.1"/>
<line x1="113.6" x2="117" y1="354.11" y2="354.11" stroke="#ff0000" stroke-width="1.1"/>
<line x1="113.6" x2="117" y1="349.39" y2="349.39" stroke="#ff0000" stroke-width="1.1"/>
<line x1="113.6" x2="117" y1="344.68" y2="344.68" stroke="#ff0000" stroke-width="1.1"/>
<line x1="110.6" x2="117" y1="339.97" y2="339.97" stroke="#ff0000" stroke-width="1.9"/>
<text x="105.8" y="345.77" class="yl">40</text>
<line x1="113.6" x2="117" y1="335.25" y2="335.25" stroke="#ff0000" stroke-width="1.1"/>
<line x1="113.6" x2="117" y1="330.54" y2="330.54" stroke="#ff0000" stroke-width="1.1"/>
<line x1="113.6" x2="117" y1="325.83" y2="325.83" stroke="#ff0000" stroke-width="1.1"/>
<line x1="113.6" x2="117" y1="321.12" y2="321.12" stroke="#ff0000" stroke-width="1.1"/>
<line x1="110.6" x2="117" y1="316.40" y2="316.40" stroke="#ff0000" stroke-width="1.9"/>
<text x="105.8" y="322.20" class="yl">60</text>
<line x1="113.6" x2="117" y1="311.69" y2="311.69" stroke="#ff0000" stroke-width="1.1"/>
<line x1="113.6" x2="117" y1="306.98" y2="306.98" stroke="#ff0000" stroke-width="1.1"/>
<line x1="113.6" x2="117" y1="302.26" y2="302.26" stroke="#ff0000" stroke-width="1.1"/>
<line x1="113.6" x2="117" y1="297.55" y2="297.55" stroke="#ff0000" stroke-width="1.1"/>
<line x1="110.6" x2="117" y1="292.84" y2="292.84" stroke="#ff0000" stroke-width="1.9"/>
<text x="105.8" y="298.64" class="yl">80</text>
<line x1="113.6" x2="117" y1="288.12" y2="288.12" stroke="#ff0000" stroke-width="1.1"/>
<line x1="113.6" x2="117" y1="283.41" y2="283.41" stroke="#ff0000" stroke-width="1.1"/>
<line x1="113.6" x2="117" y1="278.70" y2="278.70" stroke="#ff0000" stroke-width="1.1"/>
<line x1="113.6" x2="117" y1="273.98" y2="273.98" stroke="#ff0000" stroke-width="1.1"/>
<line x1="110.6" x2="117" y1="269.27" y2="269.27" stroke="#ff0000" stroke-width="1.9"/>
<text x="105.8" y="275.07" class="yl">100</text>
<line x1="113.6" x2="117" y1="264.56" y2="264.56" stroke="#ff0000" stroke-width="1.1"/>
<line x1="113.6" x2="117" y1="259.84" y2="259.84" stroke="#ff0000" stroke-width="1.1"/>
<line x1="113.6" x2="117" y1="255.13" y2="255.13" stroke="#ff0000" stroke-width="1.1"/>
<line x1="113.6" x2="117" y1="250.42" y2="250.42" stroke="#ff0000" stroke-width="1.1"/>
<line x1="110.6" x2="117" y1="245.70" y2="245.70" stroke="#ff0000" stroke-width="1.9"/>
<text x="105.8" y="251.50" class="yl">120</text>
<line x1="113.6" x2="117" y1="240.99" y2="240.99" stroke="#ff0000" stroke-width="1.1"/>
<line x1="113.6" x2="117" y1="236.28" y2="236.28" stroke="#ff0000" stroke-width="1.1"/>
<line x1="113.6" x2="117" y1="231.56" y2="231.56" stroke="#ff0000" stroke-width="1.1"/>
<line x1="113.6" x2="117" y1="226.85" y2="226.85" stroke="#ff0000" stroke-width="1.1"/>
<line x1="110.6" x2="117" y1="222.14" y2="222.14" stroke="#ff0000" stroke-width="1.9"/>
<text x="105.8" y="227.94" class="yl">140</text>
<line x1="113.6" x2="117" y1="217.42" y2="217.42" stroke="#ff0000" stroke-width="1.1"/>
<line x1="113.6" x2="117" y1="212.71" y2="212.71" stroke="#ff0000" stroke-width="1.1"/>
<line x1="113.6" x2="117" y1="208.00" y2="208.00" stroke="#ff0000" stroke-width="1.1"/>
<line x1="113.6" x2="117" y1="203.29" y2="203.29" stroke="#ff0000" stroke-width="1.1"/>
<line x1="110.6" x2="117" y1="198.57" y2="198.57" stroke="#ff0000" stroke-width="1.9"/>
<text x="105.8" y="204.37" class="yl">160</text>
<line x1="113.6" x2="117" y1="193.86" y2="193.86" stroke="#ff0000" stroke-width="1.1"/>
<line x1="113.6" x2="117" y1="189.15" y2="189.15" stroke="#ff0000" stroke-width="1.1"/>
<line x1="113.6" x2="117" y1="184.43" y2="184.43" stroke="#ff0000" stroke-width="1.1"/>
<line x1="113.6" x2="117" y1="179.72" y2="179.72" stroke="#ff0000" stroke-width="1.1"/>
<line x1="110.6" x2="117" y1="175.01" y2="175.01" stroke="#ff0000" stroke-width="1.9"/>
<text x="105.8" y="180.81" class="yl">180</text>
<line x1="113.6" x2="117" y1="170.29" y2="170.29" stroke="#ff0000" stroke-width="1.1"/>
<line x1="113.6" x2="117" y1="165.58" y2="165.58" stroke="#ff0000" stroke-width="1.1"/>
<line x1="113.6" x2="117" y1="160.87" y2="160.87" stroke="#ff0000" stroke-width="1.1"/>
<line x1="113.6" x2="117" y1="156.15" y2="156.15" stroke="#ff0000" stroke-width="1.1"/>
<line x1="110.6" x2="117" y1="151.44" y2="151.44" stroke="#ff0000" stroke-width="1.9"/>
<text x="105.8" y="157.24" class="yl">200</text>
<line x1="113.6" x2="117" y1="146.73" y2="146.73" stroke="#ff0000" stroke-width="1.1"/>
<line x1="113.6" x2="117" y1="142.01" y2="142.01" stroke="#ff0000" stroke-width="1.1"/>
<line x1="113.6" x2="117" y1="137.30" y2="137.30" stroke="#ff0000" stroke-width="1.1"/>
<line x1="113.6" x2="117" y1="132.59" y2="132.59" stroke="#ff0000" stroke-width="1.1"/>
<line x1="110.6" x2="117" y1="127.87" y2="127.87" stroke="#ff0000" stroke-width="1.9"/>
<text x="105.8" y="133.67" class="yl">220</text>
<line x1="113.6" x2="117" y1="123.16" y2="123.16" stroke="#ff0000" stroke-width="1.1"/>
<line x1="113.6" x2="117" y1="118.45" y2="118.45" stroke="#ff0000" stroke-width="1.1"/>
<line x1="113.6" x2="117" y1="113.73" y2="113.73" stroke="#ff0000" stroke-width="1.1"/>
<line x1="113.6" x2="117" y1="109.02" y2="109.02" stroke="#ff0000" stroke-width="1.1"/>
<line x1="110.6" x2="117" y1="104.31" y2="104.31" stroke="#ff0000" stroke-width="1.9"/>
<text x="105.8" y="110.11" class="yl">240</text>
<line x1="113.6" x2="117" y1="99.59" y2="99.59" stroke="#ff0000" stroke-width="1.1"/>
<line x1="113.6" x2="117" y1="94.88" y2="94.88" stroke="#ff0000" stroke-width="1.1"/>
<line x1="113.6" x2="117" y1="90.17" y2="90.17" stroke="#ff0000" stroke-width="1.1"/>
<line x1="113.6" x2="117" y1="85.46" y2="85.46" stroke="#ff0000" stroke-width="1.1"/>
<line x1="110.6" x2="117" y1="80.74" y2="80.74" stroke="#ff0000" stroke-width="1.9"/>
<text x="105.8" y="86.54" class="yl">260</text>
<line x1="113.6" x2="117" y1="76.03" y2="76.03" stroke="#ff0000" stroke-width="1.1"/>
<line x1="113.6" x2="117" y1="71.32" y2="71.32" stroke="#ff0000" stroke-width="1.1"/>
<line x1="113.6" x2="117" y1="66.60" y2="66.60" stroke="#ff0000" stroke-width="1.1"/>
<line x1="113.6" x2="117" y1="61.89" y2="61.89" stroke="#ff0000" stroke-width="1.1"/>
<line x1="110.6" x2="117" y1="56.35" y2="56.35" stroke="#ff0000" stroke-width="1.9"/>
<text x="105.8" y="62.15" class="yl">280</text>
<line x1="113.6" x2="117" y1="52.46" y2="52.46" stroke="#ff0000" stroke-width="1.1"/>
<line x1="113.6" x2="117" y1="47.75" y2="47.75" stroke="#ff0000" stroke-width="1.1"/>
<line x1="113.6" x2="117" y1="43.04" y2="43.04" stroke="#ff0000" stroke-width="1.1"/>
<line x1="113.6" x2="117" y1="38.32" y2="38.32" stroke="#ff0000" stroke-width="1.1"/>
<line x1="110.6" x2="117" y1="33.61" y2="33.61" stroke="#ff0000" stroke-width="1.9"/>
<text x="105.8" y="39.41" class="yl">300</text>
<line x1="113.6" x2="117" y1="28.90" y2="28.90" stroke="#ff0000" stroke-width="1.1"/>
<line x1="113.6" x2="117" y1="24.18" y2="24.18" stroke="#ff0000" stroke-width="1.1"/>
<line x1="113.6" x2="117" y1="19.47" y2="19.47" stroke="#ff0000" stroke-width="1.1"/>
<line x1="113.6" x2="117" y1="14.76" y2="14.76" stroke="#ff0000" stroke-width="1.1"/>
<text transform="translate(70.6 200.30) rotate(-90)" class="yl" style="text-anchor:middle">km/h</text>
</svg>

<!-- ================= BOTTOM ================= -->
<div class="abs" style="left:0;top:702.8px;width:1615px;height:262px;background:#ebebeb"></div>
<div class="abs" style="left:0;top:702.6px;width:1615px;height:1.4px;background:#b9b9b9"></div>
<div class="abs" style="left:0;top:714.6px;width:1615px;height:1.1px;background:#d9d9d9"></div>
<!-- text box + panel -->
<div class="abs" style="left:900px;top:715px;width:397px;height:28.6px;border-right:1.2px solid #d8d8d8;border-bottom:1.2px solid #d8d8d8"></div>
<div class="abs" style="left:900px;top:715px;width:383.8px;height:17.2px;border:1.1px solid #cdcdcd;background:linear-gradient(#ececec,#fdfdfd 40%,#ffffff 60%,#f3f3f3)"></div>
<!-- close btn right -->
<div class="abs" style="left:1597.2px;top:726px;width:20px;height:29.6px;background:#b5b5b5"></div>
<svg class="abs" style="left:1606px;top:735px" width="14" height="13" viewBox="0 0 14 13"><path d="M1 1 L12 12 M12 1 L1 12" stroke="#e9e9e9" stroke-width="1.5"/></svg>
<!-- table -->
<div class="abs" style="left:0;top:761.6px;width:1615px;height:1.4px;background:#fafafa"></div>
<div class="abs" style="left:0;top:763px;width:1615px;height:1px;background:#939393"></div>
<div class="abs tah" style="left:0;top:764px;width:1601px;height:178px;background:#fff;overflow:hidden;font-size:16.4px">
  <div class="brow" style="top:0;height:33px;background:#c0c0c0;box-shadow:inset 0 -1.7px 0 #6c6c6c"><span class="bt" style="color:#ff1414;letter-spacing:-.13px;top:.9px">VBOX_20130508202919_0001.vbo</span></div>
  <div class="brow" style="top:33px;height:31px"><span class="bt" style="color:#0a0a0a;letter-spacing:-.22px;top:-1px">40 Minutes 59.19 Seconds</span><span class="abs" style="left:3.4px;top:-1px;line-height:32px;color:#0a0a0a">Run Time</span></div>
  <div class="brow" style="top:64px;height:32px"><span class="bt" style="color:#7a0a0a;top:-1px">825,40</span><span class="abs" style="left:3.4px;top:-1px;line-height:32px;color:#8a1010">Cursor</span></div>
  <div class="brow" style="top:96px;height:31px"><span class="bt" style="color:#ff1414;top:-1px">280,31</span></div>
  <div class="brow" style="top:127px;height:32px"><span class="bt" style="color:#bdbdbd">0,014</span></div>
  <div class="brow" style="top:159px;height:32px"><span class="bt" style="color:#9b9b9b;top:-1px">0,156</span></div>
  <div class="abs" style="left:0;top:1px;width:2px;height:30px;background:#f2f2f2"></div><div class="abs" style="left:0;top:1px;width:1067px;height:1px;background:#e2e2e2"></div><div class="abs" style="left:1068px;top:1px;width:540px;height:2px;background:#f2f2f2"></div><div class="abs" style="left:1068px;top:1px;width:1.4px;height:30px;background:#f7f7f7"></div>
  <div class="abs" style="left:0;top:0;width:1601px;height:1px;background:#808080"></div>
  <div class="abs" style="left:1067px;top:0;width:1px;height:178px;background:#6c6c6c"></div>
  <!-- checkboxes -->
  <div class="abs" style="left:1.8px;top:96.6px;width:17px;height:16.4px;background:#fff;border-right:1.6px solid #e6e6e6;border-bottom:1.6px solid #e6e6e6;border-top:2.2px solid #858585;border-left:2.2px solid #858585"></div>
  <svg class="abs" style="left:5.2px;top:99.6px" width="14" height="12" viewBox="0 0 14 12"><path d="M1.6 5.2 L5.2 9 L12 1.6" stroke="#000" stroke-width="2.6" fill="none"/></svg>
  <div class="abs" style="left:1.8px;top:128.2px;width:17px;height:16.4px;background:#fff;border-right:1.6px solid #e6e6e6;border-bottom:1.6px solid #e6e6e6;border-top:2.2px solid #858585;border-left:2.2px solid #858585"></div>
  <div class="abs" style="left:1.8px;top:159.8px;width:17px;height:16.4px;background:#fff;border-right:1.6px solid #e6e6e6;border-bottom:1.6px solid #e6e6e6;border-top:2.2px solid #858585;border-left:2.2px solid #858585"></div>
</div>
<!-- scrollbars -->
<div class="abs" style="left:1601px;top:764.4px;width:16px;height:200px;background:#f0f0f0"></div>
<div class="abs" style="left:0;top:941.8px;width:1615px;height:24px;background:#f0f0f0"></div>
<div class="abs" style="left:1601.4px;top:791px;width:14px;height:24px;background:#cdcdcd"></div>
<svg class="abs" style="left:1605.4px;top:774.2px" width="12" height="10" viewBox="0 0 12 10"><path d="M1.4 8.2 L6.6 2.6 L11.8 8.2" stroke="#4d4d4d" stroke-width="2.9" fill="none"/></svg>
<svg class="abs" style="left:1605.4px;top:923px" width="12" height="10" viewBox="0 0 12 10"><path d="M1.4 1.8 L6.6 7.4 L11.8 1.8" stroke="#4d4d4d" stroke-width="2.9" fill="none"/></svg>
<svg class="abs" style="left:1582px;top:946px" width="10" height="14" viewBox="0 0 10 14"><path d="M2.4 2.4 L7.4 7 L2.4 11.6" stroke="#4d4d4d" stroke-width="2.9" fill="none"/></svg>
<svg class="abs" style="left:6px;top:946px" width="10" height="14" viewBox="0 0 10 14"><path d="M7.6 2.4 L2.6 7 L7.6 11.6" stroke="#4d4d4d" stroke-width="2.9" fill="none"/></svg>
<svg class="abs" style="left:1606px;top:955px" width="9" height="9" viewBox="0 0 9 9"><g fill="#b9b9b9"><rect x="6" y="0" width="2" height="2"/><rect x="3" y="3" width="2" height="2"/><rect x="6" y="3" width="2" height="2"/><rect x="0" y="6" width="2" height="2"/><rect x="3" y="6" width="2" height="2"/><rect x="6" y="6" width="2" height="2"/></g></svg>


<!-- ================= DIALOG ================= -->
<div class="abs" id="dlg">
  <!-- title icon -->
  <svg class="abs" style="left:13.8px;top:10.9px" width="24.4" height="24" viewBox="0 0 24.4 24">
    <path d="M0 0 H24.4 V14.8 H17.6 V24 H0 Z" fill="#0d2f5c"/>
    <path d="M0 10.6 H17.6 V24 H0 Z" fill="#e9e9ea"/>
    <path d="M0 10.6 L3 12.4 L5 10 L7.6 12.6 L10 10.4 L12.6 13 L14.6 10.6 L17.6 12 V10 H0 Z" fill="#0d2f5c"/>
    <path d="M.6 5.2 C4 3.4 8 3.6 11.6 4.8 C15 6 19 7.6 24.4 7.8 L24.4 10.6 C20 11.6 17.6 10.4 15 8.6 C11 6.2 5 5.6 .6 6.6 Z" fill="#e4eaf1"/>
    <path d="M4.6 2.2 h3 M17 9.4 h2 M20 8.4 h1.6" stroke="#b9c6d8" stroke-width="1"/>
    <path d="M5.6 22.6 L9.6 15.6 L11 17.6 L8 23.4 Z M11.6 13.6 L13.6 21.6 L16.6 23 L16 13.6 Z M1 22.4 L3.6 20 L4.6 21.6 L2 23.6 Z" fill="#15171c"/>
    <path d="M2 15.6 h1.4 M6 17 h1.2 M6.6 13.6 h1" stroke="#30343c" stroke-width="1"/>
  </svg>
  <!-- caption buttons -->
  <div class="abs" style="left:880px;top:19.6px;width:16px;height:3.2px;background:#1e1e1e"></div>
  <div class="abs" style="left:919px;top:9.2px;width:14px;height:9.8px;border:2px solid #1e1e1e"></div>
  <div class="abs" style="left:948.2px;top:1px;width:68.6px;height:30.8px;background:#c75050"></div>
  <svg class="abs" style="left:974.6px;top:9.2px" width="16" height="14" viewBox="0 0 16 14"><path d="M1.6 1 L14.2 13 M14.2 1 L1.6 13" stroke="#fff" stroke-width="2.2" fill="none"/></svg>
  <!-- client -->
  <div class="abs" id="client">
    <!-- tab page -->
    <div class="abs" style="left:0;top:30.4px;width:1001px;height:280px;background:#fff;border-right:1.3px solid #9a9a9a;border-top:1.3px solid #d9d9d9"></div>
    <!-- tab -->
    <div class="abs" style="left:0;top:0;width:92.4px;height:31.8px;background:#fff;border-right:1.7px solid #a9a9a9;box-shadow:1.2px 1.2px 0 #e3e3e3 inset"></div>
    <div class="abs" style="left:4.6px;top:4.6px;width:82.2px;height:22.4px;border:1.6px dotted #222"></div>
    <div class="abs" style="left:12.4px;top:3.6px;font-size:16.1px;line-height:22px;color:#111;white-space:nowrap;letter-spacing:.06px">Main Run</div>
    <!-- grid frame -->
    <div class="abs" style="left:8px;top:38px;width:990.2px;height:280px;box-shadow:inset 1.8px 1.6px 0 #787878"></div>
    <!-- grid -->
    <div class="abs tah" style="left:9px;top:39.8px;width:975.4px;height:150px;font-size:16.4px">
      <div class="abs" style="left:0;top:0;width:975.4px;height:29.6px;background:#f0f0f0;box-shadow:inset -1.6px 0 0 #858585, inset 0 -1.6px 0 #7e7e7e;box-sizing:border-box;text-align:center;font-weight:bold;line-height:31.6px;padding-left:4px;font-size:16.4px;letter-spacing:.33px;color:#0a0a0a">VBOX_20130508202919_0001.vbo</div>
      <div class="abs" style="left:0;top:29.6px;width:975.4px;height:29.9px;background:#f0f0f0;box-shadow:inset 0 -1.6px 0 #7e7e7e;box-sizing:border-box;font-size:16.4px;letter-spacing:.28px;color:#0a0a0a">
        <div class="hc" style="left:0;width:255.4px">Channel</div>
        <div class="hc" style="left:255.4px;width:120px">Start Value</div>
        <div class="hc" style="left:375.4px;width:120px">End Value</div>
        <div class="hc" style="left:495.4px;width:120px">Difference</div>
        <div class="hc" style="left:615.4px;width:120px">Maximum</div>
        <div class="hc" style="left:735.4px;width:120px">Minimum</div>
        <div class="hc" style="left:855.4px;width:120px;letter-spacing:.7px">Average</div>
      </div>
      <div class="row" style="top:59.4px">
        <div class="c" style="left:0;width:255.4px;letter-spacing:-.24px">Time (secs)</div><div class="c" style="left:255.4px;width:120px">820,840</div><div class="c" style="left:375.4px;width:120px">825,400</div><div class="c" style="left:495.4px;width:120px">4,560</div><div class="c" style="left:615.4px;width:120px;letter-spacing:.65px">------</div><div class="c" style="left:735.4px;width:120px;letter-spacing:.65px">------</div><div class="c" style="left:855.4px;width:120px;letter-spacing:.65px">------</div>
      </div>
      <div class="row" style="top:89.4px">
        <div class="c" style="left:0;width:255.4px;letter-spacing:-.24px">Speed (km/h)</div><div class="c" style="left:255.4px;width:120px">250,150</div><div class="c" style="left:375.4px;width:120px">280,310</div><div class="c" style="left:495.4px;width:120px">30,160</div><div class="c" style="left:615.4px;width:120px">280,313</div><div class="c" style="left:735.4px;width:120px">249,820</div><div class="c" style="left:855.4px;width:120px">266,057</div>
      </div>
      <div class="row" style="top:119.4px">
        <div class="c" style="left:0;width:255.4px;letter-spacing:-.24px">Distance (metres)</div><div class="c" style="left:255.4px;width:120px">31959,603</div><div class="c" style="left:375.4px;width:120px">32299,592</div><div class="c" style="left:495.4px;width:120px">339,989</div><div class="c" style="left:615.4px;width:120px;letter-spacing:.65px">------</div><div class="c" style="left:735.4px;width:120px;letter-spacing:.65px">------</div><div class="c" style="left:855.4px;width:120px;letter-spacing:.65px">------</div>
      </div>
    </div>
  </div>
</div>


</body>
</html>
